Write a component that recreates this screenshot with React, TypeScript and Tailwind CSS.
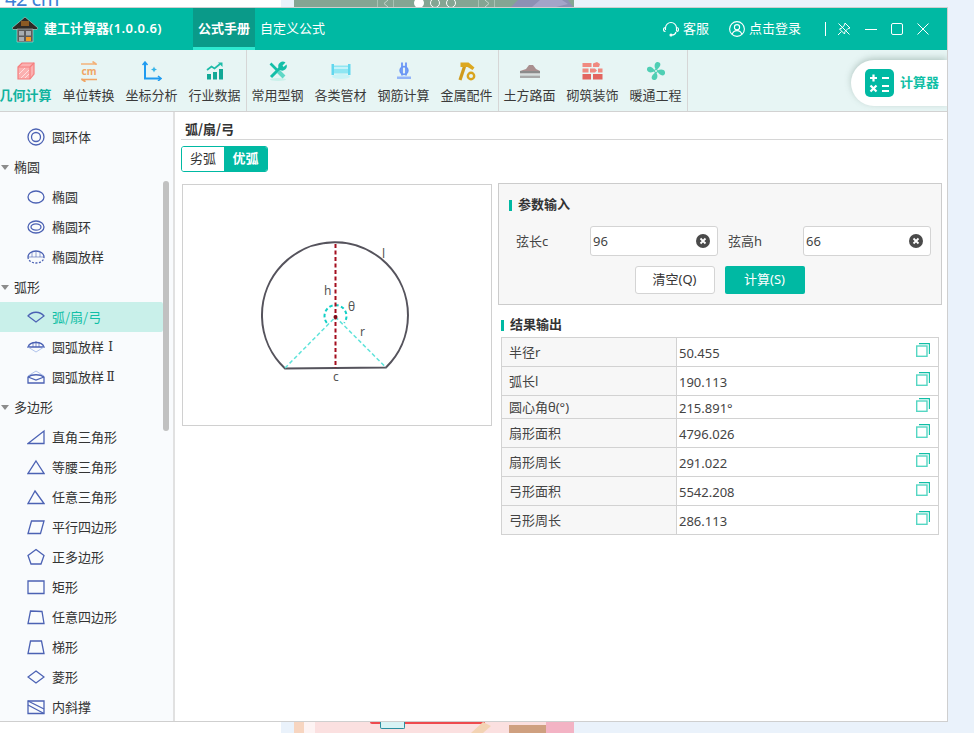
import type { ReactNode } from 'react';

const fontStack = 'font-["Noto_Sans","Noto_Sans_CJK_SC",sans-serif]';
const cjkFirst = 'font-["Noto_Sans_CJK_SC","Noto_Sans",sans-serif]';

function ToolCube() {
  return (
    <svg width="18" height="18" viewBox="0 0 18 18">
      <path d="M1 5l4-4h12v11l-4 5H1z" fill="#fbb0b0" stroke="#f57f7f" strokeWidth="1.200" />
      <path d="M1 5h12v12M13 5l4-4" fill="none" stroke="#f57f7f" strokeWidth="1.200" />
      <path d="M2 12l6-6M4 16l8-8M8 16l4-4" stroke="#fde0e0" />
    </svg>
  );
}

function ToolUnit() {
  return (
    <svg width="18" height="21" viewBox="0 0 18 21">
      <path d="M1 3h15M12.500 0.500L16 3v1" fill="none" stroke="#f3b27a" strokeWidth="1.700" />
      <path d="M17 18.500H2M5.500 20.800L2 18.500v-1" fill="none" stroke="#f0a565" strokeWidth="1.700" />
      <text x="9" y="14" textAnchor="middle" fontSize="10" fontWeight="700" fill="#f0a565" fontFamily="Noto Sans">
        cm
      </text>
    </svg>
  );
}

function ToolAxis() {
  return (
    <svg width="20" height="20" viewBox="0 0 20 20">
      <path d="M3 2v15.500h15" fill="none" stroke="#1f9bf0" strokeWidth="2" />
      <path d="M0.500 4L3 1l2.500 3M16 15l3 2.500-3 2.500" fill="none" stroke="#1f9bf0" strokeWidth="1.500" />
      <path d="M12 5.500l.9 2.100 2.100.9-2.100.9-.9 2.100-.9-2.100-2.100-.9 2.100-.9z" fill="#35b4e8" />
    </svg>
  );
}

function ToolChart() {
  return (
    <svg width="18" height="18" viewBox="0 0 18 18">
      <path d="M1 8l4.500-3.500 3 2L14 2" fill="none" stroke="#1dbca8" strokeWidth="1.700" />
      <path d="M12 0.500h4.500V5z" fill="#1dbca8" />
      <path d="M1 12h4v5.500H1zM7 10h4v7.500H7zM13 7h4v10.500h-4z" fill="#12a896" />
    </svg>
  );
}

function ToolWrench() {
  return (
    <svg width="20" height="20" viewBox="0 0 20 20" fill="none">
      <ellipse cx="10" cy="18.500" rx="8" ry="1.500" fill="#c9f1ea" />
      <path d="M2.500 2.500L9 9" stroke="#14bfa8" strokeWidth="2.600" />
      <path d="M10.500 10.500l5.500 5.500" stroke="#5fd8c6" strokeWidth="4" />
      <path d="M3 16L12.500 6.500" stroke="#14bfa8" strokeWidth="3" />
      <path d="M17.500 1.500L14.500 4.500l1 1.500 3-2.500A4.500 4.500 0 0 1 12 9L10.500 6.500A4.500 4.500 0 0 1 17.500 1.500z" fill="#14bfa8" />
    </svg>
  );
}

function ToolPipe() {
  return (
    <svg width="20" height="16" viewBox="0 0 20 16">
      <ellipse cx="10" cy="13.500" rx="9" ry="2.500" fill="#c9f3f6" />
      <path d="M2 2.500h16v8H2z" fill="#8fe6f2" />
      <path d="M0.500 1h2.500v11H0.500zM17 1h2.500v11H17z" fill="#62d7ee" />
      <path d="M3 5h14" stroke="#d7f7fb" strokeWidth="1.500" />
    </svg>
  );
}

function ToolRebar() {
  return (
    <svg width="16" height="18" viewBox="0 0 16 18">
      <path d="M6 0.500v13M10 0.500v13" stroke="#6a96f5" strokeWidth="1.800" />
      <circle cx="8" cy="8.500" r="3.800" fill="none" stroke="#6a96f5" strokeWidth="1.800" />
      <path d="M1 14.500h14v2.500H1z" fill="#92b4f8" />
    </svg>
  );
}

function ToolHammer() {
  return (
    <svg width="19" height="19" viewBox="0 0 19 19" fill="none">
      <path d="M8 3L3 18" stroke="#cf9a1c" strokeWidth="3.200" />
      <path d="M3.500 0.500h8l6 5-2 2.500-5-3H3.500z" fill="#dca820" />
      <circle cx="14" cy="14" r="3.200" stroke="#d9a41e" strokeWidth="2.400" />
    </svg>
  );
}

function ToolEarth() {
  return (
    <svg width="22" height="14" viewBox="0 0 22 14">
      <path d="M1 7l6-2 3-4h4l3 4 4 2z" fill="#a98f8f" />
      <path d="M1 7h20v2H1z" fill="#8b8b8b" />
      <path d="M1 9h20v1.500H1z" fill="#c7c7c7" />
      <path d="M1 11.500h20V14H1z" fill="#a9a9a9" />
    </svg>
  );
}

function ToolBrick() {
  return (
    <svg width="21" height="18" viewBox="0 0 21 18">
      <path d="M0.500 1h9v4h-9zM11 1.500l4-1.500 3 2-1 3h-6zM0.500 6.500h6v4h-6zM8 6.500h5l2 2-2 2H8zM16 6.500h4.500v4H16z" fill="#f08a80" />
      <path d="M0.500 12h8.500v5.500H0.500zM11 12h9.500v5.500H11z" fill="#e2655f" />
    </svg>
  );
}

function ToolFan() {
  const petal = 'M10 9C8 6 8 2 11 1c3-.5 4 2 3 4-1 2-2.500 3-4 4z';
  return (
    <svg width="20" height="20" viewBox="0 0 20 20" fill="#4fcfb4">
      <path d={petal} />
      <path d={petal} transform="rotate(90 10 10)" />
      <path d={petal} transform="rotate(180 10 10)" />
      <path d={petal} transform="rotate(270 10 10)" />
      <circle cx="10" cy="10" r="2" fill="#4fcfb4" />
      <circle cx="10" cy="10" r="1" fill="#e7f5f4" />
    </svg>
  );
}

const toolGroups: { name: string; icon: ReactNode; active?: boolean }[][] = [
  [
    { name: '几何计算', icon: <ToolCube />, active: true },
    { name: '单位转换', icon: <ToolUnit /> },
    { name: '坐标分析', icon: <ToolAxis /> },
    { name: '行业数据', icon: <ToolChart /> },
  ],
  [
    { name: '常用型钢', icon: <ToolWrench /> },
    { name: '各类管材', icon: <ToolPipe /> },
    { name: '钢筋计算', icon: <ToolRebar /> },
    { name: '金属配件', icon: <ToolHammer /> },
  ],
  [
    { name: '土方路面', icon: <ToolEarth /> },
    { name: '砌筑装饰', icon: <ToolBrick /> },
    { name: '暖通工程', icon: <ToolFan /> },
  ],
];

const shapeIcons: Record<string, ReactNode> = {
  torus: (
    <>
      <circle cx="9" cy="9" r="8" />
      <circle cx="9" cy="9" r="4.500" />
    </>
  ),
  ellipse: <ellipse cx="9" cy="9" rx="8" ry="6" />,
  ellipseRing: (
    <>
      <ellipse cx="9" cy="9" rx="8" ry="6" />
      <ellipse cx="9" cy="9" rx="5" ry="3.200" />
    </>
  ),
  ellipseLayout: (
    <>
      <path d="M1 9c0-3.500 3.500-6 8-6s8 2.500 8 6" />
      <path d="M1 9c0 3.500 3.500 6 8 6s8-2.500 8-6" strokeDasharray="2 1.500" />
      <path d="M1 9h16M5 4.500V9M9 3v6M13 4.500V9" strokeWidth="0.600" />
    </>
  ),
  arc: <path d="M1 8c4-5 12-5 16 0l-8 6z" />,
  arcOne: (
    <>
      <path d="M1 9c2-6 14-6 16 0z" />
      <path d="M6 4v5M9 3v6M12 4v5" strokeWidth="0.700" />
      <path d="M1 9l8 5 8-5" stroke="#9db4e6" strokeWidth="0.800" />
    </>
  ),
  arcTwo: (
    <>
      <path d="M1 8l8-5 8 5" stroke="#9db4e6" strokeWidth="0.800" />
      <path d="M1 9c4-3 12-3 16 0v6H1z" />
      <path d="M1 9l8 3 8-3" />
    </>
  ),
  rightTriangle: <path d="M1 15.500L17 3v12.500z" />,
  isosceles: <path d="M9 3l8 12.500H1z" />,
  triangle: <path d="M8 3l9 12.500H1z" />,
  parallelogram: <path d="M4.500 3H17l-3.500 12.500H1z" />,
  pentagon: <path d="M9 1.500l8 6-3 8.500H4L1 7.500z" />,
  rect: <path d="M1 3h16v12.500H1z" />,
  quad: <path d="M3.500 3L15 3.500l2 12H1z" />,
  trapezoid: <path d="M3.500 3h11l2.500 12.500H1z" />,
  rhombus: <path d="M9 3l8 6-8 6-8-6z" />,
  brace: (
    <>
      <path d="M1 3h16v12.500H1z" />
      <path d="M1 3l16 8M1 7l16 8.500" />
    </>
  ),
};

type TreeItem = { label: string; numeral?: string; icon?: string; heading?: boolean; active?: boolean };

const treeRows: TreeItem[] = [
  { label: '圆环体', icon: 'torus' },
  { label: '椭圆', heading: true },
  { label: '椭圆', icon: 'ellipse' },
  { label: '椭圆环', icon: 'ellipseRing' },
  { label: '椭圆放样', icon: 'ellipseLayout' },
  { label: '弧形', heading: true },
  { label: '弧/扇/弓', icon: 'arc', active: true },
  { label: '圆弧放样', numeral: 'Ⅰ', icon: 'arcOne' },
  { label: '圆弧放样', numeral: 'Ⅱ', icon: 'arcTwo' },
  { label: '多边形', heading: true },
  { label: '直角三角形', icon: 'rightTriangle' },
  { label: '等腰三角形', icon: 'isosceles' },
  { label: '任意三角形', icon: 'triangle' },
  { label: '平行四边形', icon: 'parallelogram' },
  { label: '正多边形', icon: 'pentagon' },
  { label: '矩形', icon: 'rect' },
  { label: '任意四边形', icon: 'quad' },
  { label: '梯形', icon: 'trapezoid' },
  { label: '菱形', icon: 'rhombus' },
  { label: '内斜撑', icon: 'brace' },
];

const results = [
  { label: '半径r', value: '50.455', rowClass: 'h-[29px]' },
  { label: '弧长l', value: '190.113', rowClass: 'h-[29px]' },
  { label: '圆心角θ(°)', value: '215.891°', rowClass: 'h-[23px]' },
  { label: '扇形面积', value: '4796.026', rowClass: 'h-[29px]' },
  { label: '扇形周长', value: '291.022', rowClass: 'h-[29px]' },
  { label: '弓形面积', value: '5542.208', rowClass: 'h-[29px]' },
  { label: '弓形周长', value: '286.113', rowClass: 'h-[29px]' },
];

function TreeRow(props: TreeItem) {
  if (props.heading) {
    return (
      <div className="flex h-[30px] items-center text-[13px] text-[#333]">
        <span className="ml-[1px] mr-[5px] h-0 w-0 border-x-[4px] border-t-[5px] border-x-transparent border-t-[#8c8c8c]" />
        {props.label}
      </div>
    );
  }
  return (
    <div
      className={`flex h-[30px] w-[163px] items-center rounded-r-[2px] pl-[27px] text-[13px] ${
        props.active ? 'bg-[#c9f0ea] text-[#10bfa6]' : 'text-[#333]'
      }`}
    >
      <svg
        width="18"
        height="18"
        viewBox="0 0 18 18"
        fill="none"
        stroke="#4c62b4"
        strokeWidth="1.300"
        className="mr-[7px] shrink-0"
      >
        {props.icon ? shapeIcons[props.icon] : null}
      </svg>
      {props.label}
      {props.numeral ? (
        <span className='w-[13px] text-center font-["DejaVu_Serif",serif] text-[12px]'>{props.numeral}</span>
      ) : null}
    </div>
  );
}

function ClearIcon() {
  return (
    <svg width="14" height="14" viewBox="0 0 14 14" className="shrink-0">
      <circle cx="7" cy="7" r="7" fill="#4a4a4a" />
      <path d="M4.500 4.500l5 5M9.500 4.500l-5 5" stroke="#fff" strokeWidth="1.800" />
    </svg>
  );
}

function CopyIcon() {
  return (
    <svg width="14" height="14" viewBox="0 0 14 14" fill="none" className="block shrink-0">
      <path d="M3 0.600h10.400V11" stroke="#10bfa6" strokeWidth="1.100" />
      <rect x="0.700" y="3" width="10.300" height="10.300" stroke="#55d6c3" strokeWidth="1.400" />
    </svg>
  );
}

function ParamField(props: { label: string; value: string; labelClass: string }) {
  return (
    <div className="flex items-center">
      <span className={`pt-[1px] text-[13px] text-[#444] ${props.labelClass}`}>{props.label}</span>
      <div className="flex h-[30px] w-[128px] items-center justify-between rounded-[3px] border border-[#d4d4d4] bg-white pl-[2px] pr-[7px] text-[13px] text-[#444]">
        <span className="pt-[2px]">{props.value}</span>
        <ClearIcon />
      </div>
    </div>
  );
}

function SectionTitle(props: { children: ReactNode }) {
  return (
    <div className="flex h-[18px] items-center text-[13px] font-bold text-[#333]">
      <span className="mr-[6px] h-[11px] w-[3px] bg-[#00b9a3]" />
      {props.children}
    </div>
  );
}

function ArcDiagram() {
  return (
    <svg width="308" height="240" viewBox="183 185 308 240" className="block">
      <path d="M285 368.500A73 73 0 1 1 386 367.500Z" fill="none" stroke="#55535c" strokeWidth="2" />
      <path d="M285 368L335.500 317 386 367.500" fill="none" stroke="#5fe3da" strokeWidth="1.500" strokeDasharray="4 2.500" />
      <path d="M326.800 322.800A11 11 0 1 1 344.200 322.800" fill="none" stroke="#12cfc6" strokeWidth="2" strokeDasharray="3.500 2.500" />
      <path d="M335.500 244v124" stroke="#a40e1f" strokeWidth="2" strokeDasharray="4 2.500" />
      <circle cx="335.500" cy="317" r="2" fill="#7c0a16" />
      <g fontSize="12" fill="#555" fontFamily="Noto Sans">
        <text x="382" y="258">l</text>
        <text x="324" y="295">h</text>
        <text x="348" y="311">θ</text>
        <text x="360" y="336">r</text>
        <text x="333" y="381">c</text>
      </g>
    </svg>
  );
}

export default function App() {
  return (
    <div className={`h-[733px] w-[974px] overflow-hidden bg-[#eaf2fb] ${fontStack}`}>
      {/* page behind the app window */}
      <div className="flex h-[7px] overflow-hidden">
        <div className="h-[7px] w-[281px] overflow-hidden bg-white pl-[5px]">
          <div className="-mt-[13px] text-[20px] leading-[24px] tracking-[-0.5px] text-[#3d7fd6]">42 cm</div>
        </div>
        <div className="w-[13px]" />
        <div className="flex h-[7px] w-[280px] items-start bg-[#84a593]">
          <span className="ml-[83px] flex h-[7px] w-[17px] items-center justify-center border-x border-[#a9c2b4]">
            <svg width="6" height="7" viewBox="0 0 6 7" fill="none" stroke="#c5d6cc">
              <path d="M5 0L1 3.500 5 7" />
            </svg>
          </span>
          <span className="-mt-[2px] ml-[20px] h-[10px] w-[10px] shrink-0 rounded-full bg-white" />
          <span className="-mt-[2px] ml-[6px] h-[10px] w-[10px] shrink-0 rounded-full border border-white" />
          <span className="-mt-[2px] ml-[6px] h-[10px] w-[10px] shrink-0 rounded-full border border-white" />
          <span className="ml-[22px] flex h-[7px] w-[17px] items-center justify-center border-x border-[#a9c2b4]">
            <svg width="6" height="7" viewBox="0 0 6 7" fill="none" stroke="#c5d6cc">
              <path d="M1 0l4 3.500L1 7" />
            </svg>
          </span>
          <svg width="64" height="7" viewBox="0 0 64 7" className="ml-[15px] shrink-0">
            <path d="M8 0h50l5 7H1z" fill="#8d90b4" />
            <path d="M30 0h22l6 4-12 3H22z" fill="#a3a4c8" />
          </svg>
        </div>
      </div>

      <div className="flex h-[715px] w-[948px] flex-col overflow-hidden border-y border-r border-[#cfcfcf] bg-white">
        <header className="flex h-[42px] shrink-0 items-stretch bg-[#00b9a3] text-white">
          <svg width="26" height="27" viewBox="0 0 26 27" className="ml-[12px] mt-[8px]">
            <path d="M0 12L13 1l13 11-1 1.500H1z" fill="#2f2a26" stroke="#d8e8e4" strokeWidth="0.500" />
            <path d="M9 5h8v5H9z" fill="#8a5a24" />
            <path d="M5 13h16v13H5z" fill="#5c5c5c" stroke="#d8e8e4" strokeWidth="0.500" />
            <path d="M7 15h5v4.500H7zM14 15h5v4.500h-5zM7 21h5v4H7z" fill="#a7adb2" />
            <path d="M14 21h5v4h-5z" fill="#ee9a26" />
          </svg>
          <div className="ml-[6px] flex w-[149px] items-center text-[13px] font-semibold">
            建工计算器<span className="tracking-[0.45px]">(1.0.0.6)</span>
          </div>
          <div className="flex w-[62px] items-center justify-center border-b-[3px] border-[#2ee8d0] bg-[#0a9a89] pt-[3px] text-[13px] font-bold">
            公式手册
          </div>
          <div className="ml-[5px] flex items-center text-[13px]">自定义公式</div>
          <div className="ml-auto flex items-center text-[13px]">
            <svg width="16" height="16" viewBox="0 0 16 16" fill="none" stroke="#fff" strokeWidth="1.100">
              <path d="M2.500 9V7a5.500 5.500 0 0 1 11 0v3" />
              <path d="M2.500 6.500a2 2 0 0 0 0 4M13.500 6.500a2 2 0 0 1 0 4M13 11c-.5 2-2 3-4 3" />
              <circle cx="8" cy="14" r="1" fill="#fff" />
            </svg>
            <span className="ml-[4px]">客服</span>
            <svg width="16" height="16" viewBox="0 0 16 16" fill="none" stroke="#fff" strokeWidth="1.100" className="ml-[20px]">
              <circle cx="8" cy="8" r="7.400" />
              <circle cx="8" cy="6.200" r="2.600" />
              <path d="M3.200 13.200c.8-2.400 2.600-3.600 4.800-3.600s4 1.200 4.800 3.600" />
            </svg>
            <span className="ml-[4px]">点击登录</span>
            <span className="ml-[24px] h-[14px] w-px bg-white" />
            <svg width="14" height="14" viewBox="0 0 14 14" fill="none" stroke="#fff" strokeWidth="1" className="ml-[11px]">
              <path d="M8 1l5 5-2 .5-3 3-.5 2.500-5-5L5 6l2.500-3z" />
              <path d="M1 13l3.500-3.500M1.500 1.500l11 11" />
            </svg>
            <span className="ml-[14px] h-px w-[12px] bg-white" />
            <span className="ml-[14px] h-[12px] w-[12px] rounded-[2px] border border-white" />
            <svg width="12" height="12" viewBox="0 0 12 12" stroke="#fff" strokeWidth="1" className="ml-[14px] mr-[18px]">
              <path d="M.5.500l11 11M11.500.500l-11 11" />
            </svg>
          </div>
        </header>

        <div className="flex h-[62px] shrink-0 border-b border-[#d2d2d2] bg-[#e7f5f4]">
          <div className="-ml-[6px] flex">
            {toolGroups.map((group, i) => (
              <div key={i} className={`flex border-r border-[#d6d6d6] ${i > 0 ? '-ml-[1px]' : ''}`}>
                {group.map((tool) => (
                  <div key={tool.name} className="flex w-[63px] flex-col items-center">
                    <div className="flex h-[36px] items-center pt-[6px]">{tool.icon}</div>
                    <div
                      className={`text-[13px] leading-[18px] ${
                        tool.active ? 'font-bold text-[#10b39e]' : 'text-[#3a3a3a]'
                      }`}
                    >
                      {tool.name}
                    </div>
                  </div>
                ))}
              </div>
            ))}
          </div>
          <div className="ml-auto mt-[10px] flex h-[46px] w-[96px] items-center rounded-l-[23px] bg-white pl-[14px] shadow-[0_-2px_6px_rgba(90,120,110,0.35)]">
            <svg width="29" height="28" viewBox="0 0 29 28" className="shrink-0">
              <rect width="29" height="28" rx="5" fill="#00b9a3" />
              <path d="M5 9h7M8.500 5.500v7M17 9h7M17 17h7M17 22h7M5.500 16.500l6 6M11.500 16.500l-6 6" stroke="#fff" strokeWidth="2.200" />
            </svg>
            <span className="ml-[6px] text-[13px] font-bold text-[#10bfa6]">计算器</span>
          </div>
        </div>

        <div className="flex min-h-0 flex-1">
          <aside className={`relative w-[175px] shrink-0 overflow-hidden border-r-2 border-[#e1e1e1] bg-[#f9fbfd] pt-[10px] ${cjkFirst}`}>
            {treeRows.map((row, i) => (
              <TreeRow key={i} {...row} />
            ))}
            <div className="absolute left-[163px] top-[69px] h-[250px] w-[6px] rounded-[3px] bg-[#c1c1c1]" />
          </aside>

          <main className="min-w-0 flex-1 pl-[6px] pr-[4px] text-[#333]">
            <div className={`flex h-[28px] items-end border-b border-[#d6d6d6] pb-[1px] pl-[4px] text-[13px] font-bold ${cjkFirst}`}>
              弧/扇/弓
            </div>
            <div className="mt-[6px] flex h-[26px] w-[87px] overflow-hidden rounded-[3px] border border-[#00b9a3] text-[13px]">
              <div className="flex w-[42px] items-center justify-center bg-white">劣弧</div>
              <div className="flex flex-1 items-center justify-center bg-[#00b9a3] font-bold text-white">优弧</div>
            </div>
            <div className="mt-[11px] flex items-start">
              <div className="ml-[1px] mt-[1px] w-[310px] shrink-0 border border-[#d0d0d0]">
                <ArcDiagram />
              </div>
              <div className="ml-[6px] w-[444px] shrink-0">
                <div className="h-[122px] border border-[#cccccc] bg-[#f7f7f7] pl-[10px] pt-[12px]">
                  <SectionTitle>参数输入</SectionTitle>
                  <div className="mt-[12px] flex pl-[7px]">
                    <ParamField label="弦长c" value="96" labelClass="w-[74px]" />
                    <ParamField label="弦高h" value="66" labelClass="ml-[10px] w-[75px]" />
                  </div>
                  <div className="mt-[10px] flex justify-center gap-[10px] pr-[11px] text-[13px]">
                    <div className="flex h-[28px] w-[80px] items-center justify-center rounded-[3px] border border-[#d4d4d4] bg-white">
                      清空(Q)
                    </div>
                    <div className="flex h-[28px] w-[80px] items-center justify-center rounded-[2px] bg-[#00b9a3] text-white">
                      计算(S)
                    </div>
                  </div>
                </div>
                <div className="ml-[3px] mt-[11px]">
                  <SectionTitle>结果输出</SectionTitle>
                  <div className="mt-[3px] w-[438px] border border-b-0 border-[#d2d2d2] text-[13px] text-[#444]">
                    {results.map((row) => (
                      <div key={row.label} className={`flex border-b border-[#d2d2d2] ${row.rowClass}`}>
                        <div className="flex w-[175px] items-center border-r border-[#d2d2d2] bg-[#f7f7f7] pl-[7px] pt-[1px]">
                          {row.label}
                        </div>
                        <div className="flex flex-1 items-center justify-between pl-[2px] pr-[8px]">
                          <span className="pt-[3px]">{row.value}</span>
                          <span className="-mt-[4px]">
                            <CopyIcon />
                          </span>
                        </div>
                      </div>
                    ))}
                  </div>
                </div>
              </div>
            </div>
          </main>
        </div>
      </div>

      <div className="flex h-[11px] overflow-hidden">
        <div className="w-[281px] bg-white" />
        <div className="w-[13px]" />
        <div className="w-[10px] bg-[#f7d5c0]" />
        <div className="w-[11px] bg-[#fdf3f3]" />
        <div className="flex w-[259px] items-start bg-[#fbe0e0]">
          <div className="ml-[55px] flex h-[2px] w-[115px] rounded-b-[3px] bg-[#ee4a4e]" />
          <div className="-ml-[105px] h-[7px] w-[25px] rounded-b-[2px] border-x border-b border-[#2a8fa0] bg-[#d7f3f5]" />
          <svg width="24" height="11" viewBox="0 0 24 11" className="ml-[66px] shrink-0">
            <path d="M12 0L0 11h12l8-7z" fill="#f3d3b4" />
          </svg>
          <div className="ml-[14px] mt-[3px] h-[8px] w-[37px] shrink-0 bg-[#cfa080]" />
          <div className="h-[11px] w-[28px] shrink-0 bg-[#f3b3c4]" />
        </div>
      </div>
    </div>
  );
}
